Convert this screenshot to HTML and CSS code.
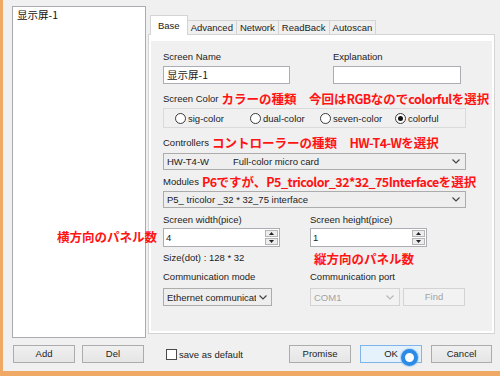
FILE: index.html
```html
<!DOCTYPE html>
<html>
<head>
<meta charset="utf-8">
<link rel="stylesheet" href="styles.css">
</head>
<body>
<div class="window">
  <div class="top">
    <div class="list"><div class="list-item">显示屏-1</div></div>
    <div class="tabs">
      <div class="tabstrip">
        <div class="tab active">Base</div>
        <div class="tab">Advanced</div>
        <div class="tab">Network</div>
        <div class="tab">ReadBack</div>
        <div class="tab">Autoscan</div>
      </div>
      <div class="panel">
        <div class="page">
          <div class="grid-name row-label">
            <div>Screen Name</div>
            <div>Explanation</div>
          </div>
          <div class="grid-name row-input">
            <div class="textbox tb-name"><span class="cjk">显示屏-1</span></div>
            <div class="textbox tb-expl"></div>
          </div>

          <div class="line line-color"><span class="lbl">Screen Color</span><span class="note">カラーの種類　今回は<span class="lat">RGB</span>なので<span class="lat">colorful</span>を選択</span></div>
          <div class="radio-group">
            <div class="radio w75"><span class="circle"></span>sig-color</div>
            <div class="radio w70"><span class="circle"></span>dual-color</div>
            <div class="radio w75"><span class="circle"></span>seven-color</div>
            <div class="radio"><span class="circle checked"></span>colorful</div>
          </div>

          <div class="line line-ctrl"><span class="lbl">Controllers</span><span class="note">コントローラーの種類　<span class="lat">HW-T4-W</span>を選択</span></div>
          <div class="combo combo-ctrl">
            <span class="combo-text"><span class="c1">HW-T4-W</span>Full-color micro card</span>
            <svg class="chev" width="8" height="5" viewBox="0 0 8 5"><polyline points="0.5,0.5 4,4 7.5,0.5" fill="none" stroke="#444" stroke-width="1.2"/></svg>
          </div>

          <div class="line line-mod"><span class="lbl">Modules</span><span class="note"><span class="lat">P6</span>ですが、<span class="lat">P5_tricolor_32*32_75Interface</span>を選択</span></div>
          <div class="combo combo-mod">
            <span class="combo-text">P5_ tricolor _32 * 32_75 interface</span>
            <svg class="chev" width="8" height="5" viewBox="0 0 8 5"><polyline points="0.5,0.5 4,4 7.5,0.5" fill="none" stroke="#444" stroke-width="1.2"/></svg>
          </div>

          <div class="grid-dim row-dimlabel">
            <div>Screen width(pice)</div>
            <div>Screen height(pice)</div>
          </div>
          <div class="grid-dim row-spin">
            <div class="spin">
              <span class="spin-val">4</span>
              <div class="spin-btns">
                <div class="spin-btn"><svg width="5" height="3" viewBox="0 0 5 3"><polygon points="0,3 2.5,0 5,3" fill="#222"/></svg></div>
                <div class="spin-btn"><svg width="5" height="3" viewBox="0 0 5 3"><polygon points="0,0 2.5,3 5,0" fill="#222"/></svg></div>
              </div>
            </div>
            <div class="spin">
              <span class="spin-val">1</span>
              <div class="spin-btns">
                <div class="spin-btn"><svg width="5" height="3" viewBox="0 0 5 3"><polygon points="0,3 2.5,0 5,3" fill="#222"/></svg></div>
                <div class="spin-btn"><svg width="5" height="3" viewBox="0 0 5 3"><polygon points="0,0 2.5,3 5,0" fill="#222"/></svg></div>
              </div>
            </div>
          </div>
          <div class="grid-dim row-size">
            <div>Size(dot) : 128 * 32</div>
            <div class="note note-h">縦方向のパネル数</div>
          </div>

          <div class="grid-dim row-commlabel">
            <div>Communication mode</div>
            <div>Communication port</div>
          </div>
          <div class="row-comm">
            <div class="combo combo-modebox">
              <span class="combo-text clip">Ethernet communication</span>
              <svg class="chev" width="8" height="5" viewBox="0 0 8 5"><polyline points="0.5,0.5 4,4 7.5,0.5" fill="none" stroke="#444" stroke-width="1.2"/></svg>
            </div>
            <div class="combo combo-port disabled">
              <span class="combo-text">COM1</span>
              <svg class="chev" width="8" height="5" viewBox="0 0 8 5"><polyline points="0.5,0.5 4,4 7.5,0.5" fill="none" stroke="#b8b8b8" stroke-width="1.2"/></svg>
            </div>
            <div class="btn btn-find disabled">Find</div>
          </div>
        </div>
      </div>
    </div>
  </div>

  <div class="footer">
    <div class="btn">Add</div>
    <div class="btn btn-del">Del</div>
    <div class="check"><span class="box"></span>save as default</div>
    <div class="spacer"></div>
    <div class="btn btn-gap">Promise</div>
    <div class="btn ok btn-gap">OK</div>
    <div class="btn btn-cancel">Cancel</div>
  </div>

  <div class="note note-w">横方向のパネル数</div>
  <div class="cursor-ring"></div>
</div>
</body>
</html>
```

FILE: styles.css
```css
* { box-sizing: border-box; }
html, body { margin: 0; padding: 0; }
body {
  width: 500px;
  height: 376px;
  overflow: hidden;
  background: #f0f0f0;
  font-family: "Liberation Sans", Arial, sans-serif;
  font-size: 9.5px;
  color: #1c1c1c;
}
.window {
  position: relative;
  height: 376px;
  border-left: 3px solid #f0a965;
  border-bottom: 5px solid #f0a965;
  background: #f0f0f0;
  display: flex;
  flex-direction: column;
}
.top {
  display: flex;
  height: 338px;
  padding: 6px 0 0 9px;
}
.list {
  width: 134px;
  height: 332px;
  background: #fff;
  border: 1px solid #a9abb0;
}
.list-item {
  font-family: "Noto Sans CJK SC", sans-serif;
  font-size: 10.5px;
  line-height: 14px;
  padding: 1px 0 0 4px;
  color: #111;
}
.cjk { font-family: "Noto Sans CJK SC", sans-serif; font-size: 10.5px; }

.tabs {
  margin-left: 2px;
  width: 347px;
  padding-top: 9px;
  display: flex;
  flex-direction: column;
}
.tabstrip {
  display: flex;
  align-items: flex-end;
  height: 19px;
  padding-left: 2px;
  position: relative;
  z-index: 1;
}
.tab {
  height: 14px;
  line-height: 13px;
  padding: 0 3px;
  margin-left: -1px;
  border: 1px solid #d4d4d4;
  border-bottom: none;
  background: #f0f0f0;
  color: #222;
}
.tab.active {
  height: 20px;
  line-height: 19px;
  margin-left: 0;
  margin-bottom: -1px;
  padding: 0 7px;
  background: #fff;
  position: relative;
  z-index: 2;
}
.panel {
  height: 300px;
  background: #fff;
  border: 1px solid #d4d4d4;
  padding: 6px 2px 2px 2px;
}
.page {
  height: 100%;
  background: #f0f0f0;
  padding: 9px 0 0 12px;
}

.grid-name { display: grid; grid-template-columns: 170px 1fr; }
.grid-dim { display: grid; grid-template-columns: 147px 1fr; }
.row-label { line-height: 14px; }
.row-input { margin-top: 2px; }
.textbox {
  height: 18px;
  background: #fff;
  border: 1px solid #abadb3;
  padding-left: 3px;
  line-height: 16px;
}
.tb-name { width: 127px; }
.tb-expl { width: 128px; }

.line {
  display: flex;
  align-items: center;
  height: 14px;
  line-height: 14px;
  white-space: nowrap;
}
.lbl { flex-shrink: 0; }
.note {
  color: #ff1414;
  font-family: "Noto Sans CJK JP", sans-serif;
  font-weight: 700;
  font-size: 12.5px;
  line-height: 14px;
  white-space: nowrap;
}
.lat { letter-spacing: -0.55px; }
.line .note { margin-left: 3px; }
.line-color { margin-top: 8px; }
.line-ctrl { margin-top: 8px; }
.line-mod { margin-top: 5px; }

.radio-group {
  margin-top: 2px;
  width: 303px;
  height: 20px;
  border: 1px solid #dadada;
  display: flex;
  align-items: center;
  padding-left: 11px;
}
.radio { display: flex; align-items: center; gap: 2px; }
.w75 { width: 75px; }
.w70 { width: 70px; }
.circle {
  width: 11px;
  height: 11px;
  border-radius: 50%;
  border: 1px solid #3a3a3a;
  background: #fff;
  display: flex;
  align-items: center;
  justify-content: center;
}
.circle.checked::after {
  content: "";
  width: 5px;
  height: 5px;
  border-radius: 50%;
  background: #111;
}

.combo {
  display: flex;
  align-items: center;
  height: 17px;
  border: 1px solid #acacac;
  background: #eeeeee;
  padding: 0 5px 0 3px;
}
.combo-text { flex: 1; white-space: nowrap; line-height: 15px; }
.combo-text.clip { overflow: hidden; margin-right: 3px; }
.c1 { display: inline-block; width: 66px; }
.combo-ctrl { margin-top: 3px; width: 303px; }
.combo-mod { margin-top: 2px; width: 303px; }

.row-dimlabel { margin-top: 5px; line-height: 14px; }
.row-spin { margin-top: 1px; }
.spin {
  display: flex;
  width: 117px;
  height: 19px;
  background: #fff;
  border: 1px solid #abadb3;
}
.spin-val { flex: 1; padding-left: 2px; line-height: 17px; }
.spin-btns {
  width: 15px;
  display: flex;
  flex-direction: column;
  gap: 1px;
  padding: 1px;
}
.spin-btn {
  flex: 1;
  border: 1px solid #b4b4b4;
  background: #ededed;
  display: flex;
  align-items: center;
  justify-content: center;
}
.row-size { margin-top: 4px; line-height: 14px; }
.note-h { padding-left: 4px; position: relative; top: 1px; }
.row-commlabel { margin-top: 5px; line-height: 14px; }
.row-comm { margin-top: 4px; display: flex; }
.combo-modebox { width: 109px; height: 18px; margin-right: 38px; padding-right: 4px; }
.combo-port { width: 90px; height: 18px; }
.combo.disabled { border-color: #d3d3d3; background: #f2f2f2; color: #a3a3a3; }

.btn {
  width: 62px;
  height: 18px;
  border: 1px solid #acacac;
  background: linear-gradient(#f0f0f0, #e5e5e5);
  text-align: center;
  line-height: 16px;
  color: #1c1c1c;
}
.btn.disabled { border-color: #d3d3d3; background: #f2f2f2; color: #a3a3a3; }
.btn-find { margin-left: 3px; }
.btn.ok { border-color: #7eb4ea; background: #e5f1fb; }

.footer {
  display: flex;
  align-items: center;
  padding: 7px 8px 0 10px;
}
.btn-del { margin-left: 7px; }
.check {
  margin-left: 22px;
  display: flex;
  align-items: center;
  gap: 2px;
}
.box {
  width: 11px;
  height: 11px;
  border: 1px solid #4a4a4a;
  background: #fff;
}
.spacer { flex: 1; }
.btn-gap { margin-right: 9px; }
.btn-cancel { width: 61px; }

.note-w {
  position: absolute;
  left: 54px;
  top: 230px;
}
.cursor-ring {
  position: absolute;
  left: 398px;
  top: 349px;
  width: 17px;
  height: 17px;
  border-radius: 50%;
  border: 4px solid #2b8be6;
  background: #fff;
  box-shadow: 0 0 1px 1px rgba(120, 180, 240, 0.5);
}
```
